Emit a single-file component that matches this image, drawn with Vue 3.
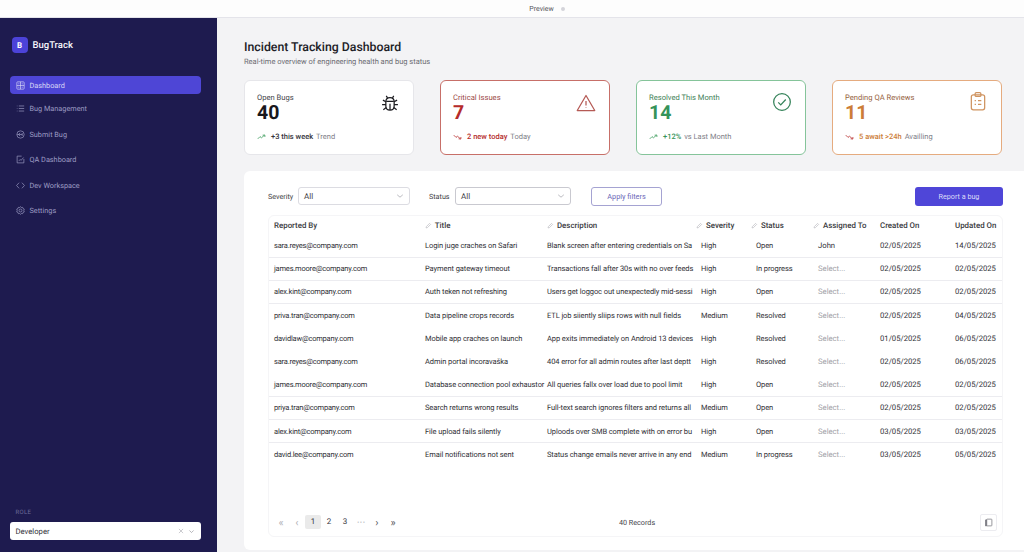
<script setup>
const navItems = [
  { label: 'Dashboard', icon: 'grid', active: true },
  { label: 'Bug Management', icon: 'list' },
  { label: 'Submit Bug', icon: 'submit' },
  { label: 'QA Dashboard', icon: 'chart' },
  { label: 'Dev Workspace', icon: 'code' },
  { label: 'Settings', icon: 'gear' }
]

const cards = [
  { label: 'Open Bugs', value: '40', strong: '+3 this week', note: 'Trend', tone: 'plain', icon: 'bug', up: true },
  { label: 'Critical Issues', value: '7', strong: '2 new today', note: 'Today', tone: 'red', icon: 'warn', up: false },
  { label: 'Resolved This Month', value: '14', strong: '+12%', note: 'vs Last Month', tone: 'green', icon: 'check', up: true },
  { label: 'Pending QA Reviews', value: '11', strong: '5 await >24h', note: 'Availling', tone: 'orange', icon: 'clip', up: false }
]

const columns = [
  { label: 'Reported By' },
  { label: 'Title', edit: true },
  { label: 'Description', edit: true },
  { label: 'Severity', edit: true, pull: true },
  { label: 'Status', edit: true, pull: true },
  { label: 'Assigned To', edit: true, pull: true },
  { label: 'Created On' },
  { label: 'Updated On' }
]

const rows = [
  ['sara.reyes@company.com', 'Login juge craches on Safari', 'Blank screen after entering credentials on Sa', 'High', 'Open', 'John', '02/05/2025', '14/05/2025', true],
  ['james.moore@company.com', 'Payment gateway timeout', 'Transactions fall after 30s with no over feeds', 'High', 'In progress', '', '02/05/2025', '02/05/2025', true],
  ['alex.kint@company.com', 'Auth teken not refreshing', 'Users get loggoc out unexpectedly mid-sessi', 'High', 'Open', '', '02/05/2025', '02/05/2025', true],
  ['priva.tran@company.com', 'Data pipeline crops records', 'ETL job siiently sliips rows with null fields', 'Medium', 'Resolved', '', '02/05/2025', '04/05/2025', false],
  ['davidlaw@company.com', 'Mobile app craches on launch', 'App exits immediately on Android 13 devices', 'High', 'Resolved', '', '01/05/2025', '06/05/2025', false],
  ['sara.reyes@company.com', 'Admin portal incoravaška', '404 error for all admin routes after last deptt', 'High', 'Resolved', '', '02/05/2025', '06/05/2025', false],
  ['james.moore@company.com', 'Database connection pool exhaustor', 'All queries fallx over load due to pool limit', 'High', 'Open', '', '02/05/2025', '02/05/2025', true],
  ['priya.tran@company.com', 'Search returns wrong results', 'Full-text search ignores filters and returns all', 'Medium', 'Open', '', '02/05/2025', '02/05/2025', true],
  ['alex.kint@company.com', 'File upload fails silently', 'Uploods over SMB complete with on error bu', 'High', 'Open', '', '03/05/2025', '03/05/2025', true],
  ['david.lee@company.com', 'Email notifications not sent', 'Status change emails never arrive in any end', 'Medium', 'In progress', '', '03/05/2025', '05/05/2025', false]
]
</script>

<template>
  <div class="page">
    <div class="topbar">
      <span>Preview</span>
      <i class="dot"></i>
    </div>

    <div class="shell">
      <aside class="sidebar">
        <div class="brand">
          <span class="logo">B</span>
          <span class="brand-name">BugTrack</span>
        </div>

        <nav class="nav">
          <a v-for="item in navItems" :key="item.label" class="nav-item" :class="{ active: item.active }">
            <svg viewBox="0 0 16 16" class="nav-icon">
              <template v-if="item.icon === 'grid'">
                <rect x="1.5" y="1.5" width="13" height="13" rx="1.5" />
                <path d="M8 1.500v13M1.500 8h13M4 5h2M10 5h2M4 11h2M10 11h2" />
              </template>
              <path v-else-if="item.icon === 'list'" d="M5 3.500h9.500M5 8h9.500M5 12.500h9.500M1.500 3.500h1M1.500 8h1M1.500 12.500h1" />
              <template v-else-if="item.icon === 'submit'">
                <circle cx="8" cy="8" r="6.500" />
                <path d="M2 8h9M7.500 5 4.500 8l3 3M11 5.500v5" />
              </template>
              <template v-else-if="item.icon === 'chart'">
                <path d="M14 7v7H2V2h8" />
                <path d="m5 10.500 2.500-2.500 1.500 1.500 4.500-5" />
              </template>
              <path v-else-if="item.icon === 'code'" d="M5.500 3 1 8l4.500 5M10.500 3 15 8l-4.500 5" />
              <template v-else>
                <circle cx="8" cy="8" r="2.600" />
                <path d="M8 1l1.500 1.800 2.300-.4.700 2.200 2.200.9-.8 2.500.8 2.500-2.200.9-.7 2.200-2.300-.4L8 15l-1.500-1.800-2.300.4-.7-2.200-2.200-.9.8-2.500-.8-2.500 2.200-.9.700-2.200 2.300.4z" />
              </template>
            </svg>
            {{ item.label }}
          </a>
        </nav>

        <div class="role">
          <div class="role-label">ROLE</div>
          <div class="role-select">
            <span>Developer</span>
            <span class="role-actions">
              <svg viewBox="0 0 10 10" class="role-x"><path d="m1.500 1.500 7 7M8.500 1.500l-7 7" /></svg>
              <svg viewBox="0 0 10 10" class="role-chev"><path d="m2 3.500 3 3 3-3" /></svg>
            </span>
          </div>
        </div>
      </aside>

      <main class="main">
        <header class="heading">
          <h1>Incident Tracking Dashboard</h1>
          <p>Real-time overview of engineering health and bug status</p>
        </header>

        <section class="cards">
          <div v-for="card in cards" :key="card.label" class="card" :class="card.tone">
            <div class="card-top">
              <div>
                <div class="card-label">{{ card.label }}</div>
                <div class="card-value">{{ card.value }}</div>
              </div>
              <svg viewBox="0 0 24 24" class="card-icon">
                <template v-if="card.icon === 'bug'">
                  <path d="M7 10.500C7 7.500 9 5.500 12 5.500s5 2 5 5v5c0 3-2 5-5 5s-5-2-5-5z" />
                  <path d="M7.500 10h9M12 13v7.500M9 5.800 7.500 3.500M15 5.800l1.500-2.300M7 10.500 3.500 8.500M17 10.500l3.500-2M7 14H2.500M17 14h4.500M7.500 17.500l-3.500 2.500M16.500 17.500l3.500 2.500" />
                </template>
                <template v-else-if="card.icon === 'warn'">
                  <path d="M12 3 22.500 21h-21z" stroke-linejoin="round" />
                  <path d="M12 9.500v5.500M12 17.500v.6" />
                </template>
                <template v-else-if="card.icon === 'check'">
                  <circle cx="12" cy="12" r="10" />
                  <path d="m7.500 12.500 3 3 6-6.500" />
                </template>
                <template v-else>
                  <rect x="4" y="4.500" width="16" height="18" rx="2.500" />
                  <rect x="8.500" y="2" width="7" height="4.500" rx="1.500" />
                  <path d="M8 11.500h1.500M12 11.500h4M8 16h1.500M12 16h4" />
                </template>
              </svg>
            </div>
            <div class="card-foot">
              <svg viewBox="0 0 12 8" class="trend" :class="{ down: !card.up }">
                <path v-if="card.up" d="m1 6.500 3-3 2 1.500 4-3.500M7.500 1.500H10.500V4" />
                <path v-else d="m1 1.500 3 3 2-1.500 4 3.500M7.500 6.500H10.500V4" />
              </svg>
              <b>{{ card.strong }}</b>
              <span>{{ card.note }}</span>
            </div>
          </div>
        </section>

        <section class="panel">
          <div class="toolbar">
            <label class="filter-label">Severity</label>
            <div class="select sev">
              <span>All</span>
              <svg viewBox="0 0 10 10"><path d="m1.500 3.500 3.500 3 3.500-3" /></svg>
            </div>
            <label class="filter-label status-label">Status</label>
            <div class="select stat">
              <span>All</span>
              <svg viewBox="0 0 10 10"><path d="m1.500 3.500 3.500 3 3.500-3" /></svg>
            </div>
            <button class="apply">Apply filters</button>
            <button class="report">Report a bug</button>
          </div>

          <div class="table-box">
            <table>
              <colgroup>
                <col class="col-1" />
                <col class="col-2" />
                <col class="col-3" />
                <col class="col-4" />
                <col class="col-5" />
                <col class="col-6" />
                <col class="col-7" />
                <col />
              </colgroup>
              <thead>
                <tr>
                  <th v-for="col in columns" :key="col.label" :class="{ pull: col.pull }">
                    <svg v-if="col.edit" viewBox="0 0 10 10" class="pencil"><path d="M1.500 8.500 2 6.500 6.500 2 8 3.500 3.500 8z" /></svg>
                    {{ col.label }}
                  </th>
                </tr>
              </thead>
              <tbody>
                <tr v-for="(row, i) in rows" :key="i" :class="{ lined: row[8] }">
                  <td class="email">{{ row[0] }}</td>
                  <td class="tight">{{ row[1] }}</td>
                  <td class="tight">{{ row[2] }}</td>
                  <td class="tight">{{ row[3] }}</td>
                  <td class="tight">{{ row[4] }}</td>
                  <td :class="{ placeholder: !row[5] }">{{ row[5] || 'Select...' }}</td>
                  <td>{{ row[6] }}</td>
                  <td>{{ row[7] }}</td>
                </tr>
              </tbody>
            </table>

            <div class="table-foot">
              <div class="pager">
                <span class="muted">«</span>
                <span class="muted">‹</span>
                <span class="page-num current">1</span>
                <span class="page-num">2</span>
                <span class="page-num">3</span>
                <span class="muted">···</span>
                <span>›</span>
                <span>»</span>
              </div>
              <div class="records">40 Records</div>
              <button class="copy">
                <svg viewBox="0 0 12 12">
                  <rect x="3.500" y="1.500" width="7" height="9" rx="0.800" />
                  <path d="M2 2.500h1.500v8H2z" fill="#8a8a90" />
                </svg>
              </button>
            </div>
          </div>
        </section>
      </main>
    </div>
  </div>
</template>

<style>
html, body {
  margin: 0;
  overflow: hidden;
}
</style>

<style scoped>
.page {
  width: 1024px;
  height: 552px;
  display: flex;
  flex-direction: column;
  overflow: hidden;
  font-family: Roboto, "Liberation Sans", sans-serif;
  text-rendering: geometricPrecision;
  color: #26262c;
  background: #f3f3f5;
}

.topbar {
  height: 17px;
  flex: none;
  display: flex;
  justify-content: center;
  align-items: center;
  gap: 7px;
  background: #fdfdfd;
  border-bottom: 1px solid #e4e4ea;
  font-size: 7px;
  color: #55555c;
  padding-left: 70px;
}

.dot {
  width: 4px;
  height: 4px;
  border-radius: 50%;
  background: #d4d4da;
}

.shell {
  flex: 1;
  display: flex;
  min-height: 0;
}

/* Sidebar */
.sidebar {
  width: 217px;
  flex: none;
  background: #1e1b4f;
  display: flex;
  flex-direction: column;
  padding: 19px 16px 12px 9.500px;
  box-sizing: border-box;
}

.brand {
  display: flex;
  align-items: center;
  gap: 5px;
  padding-left: 2px;
  margin-bottom: 23px;
}

.logo {
  width: 16px;
  height: 16px;
  border-radius: 4px;
  background: #4c43d8;
  color: #fff;
  font-size: 8px;
  font-weight: 700;
  display: flex;
  align-items: center;
  justify-content: center;
}

.brand-name {
  font-size: 9.500px;
  font-weight: 500;
  color: #f4f4fa;
}

.nav {
  display: flex;
  flex-direction: column;
  gap: 7.500px;
}

.nav-item {
  height: 18px;
  display: flex;
  align-items: center;
  gap: 5px;
  padding-left: 6px;
  border-radius: 4px;
  font-size: 7.300px;
  color: #9d9cc4;
}

.nav-item.active {
  background: #4e46d6;
  color: #d8d8f6;
  margin-bottom: -2px;
}

.nav-icon {
  width: 9px;
  height: 9px;
  fill: none;
  stroke: currentColor;
  stroke-width: 1.200;
  flex: none;
}

.role {
  margin-top: auto;
}

.role-label {
  font-size: 6px;
  letter-spacing: 0.300px;
  color: #6d6c9a;
  margin: 0 0 6px 6px;
}

.role-select {
  height: 18px;
  border-radius: 3px;
  background: #fff;
  display: flex;
  align-items: center;
  justify-content: space-between;
  padding: 0 6px;
  font-size: 7.700px;
  color: #33333a;
}

.role-actions {
  display: flex;
  align-items: center;
  gap: 4px;
}

.role-actions svg {
  fill: none;
  stroke-width: 1;
}

.role-x {
  width: 6px;
  height: 6px;
  stroke: #aaaab0;
}

.role-chev {
  width: 7px;
  height: 7px;
  stroke: #9a9aa0;
}

/* Main area */
.main {
  flex: 1;
  min-width: 0;
  padding: 23px 0 0 27px;
  display: flex;
  flex-direction: column;
}

.heading h1 {
  margin: 0;
  font-size: 12.300px;
  line-height: 15px;
  font-weight: 500;
  color: #202026;
}

.heading p {
  margin: 0;
  font-size: 7.500px;
  line-height: 11px;
  color: #6b6b72;
}

.cards {
  display: flex;
  gap: 26px;
  margin-top: 13px;
}

.card {
  width: 170px;
  height: 75px;
  box-sizing: border-box;
  flex: none;
  background: #fff;
  border: 1px solid #e6e6ea;
  border-radius: 6px;
  padding: 12px 12px 0;
  display: flex;
  flex-direction: column;
}

.card.red {
  border-color: #c76f68;
}

.card.green {
  border-color: #85c49a;
}

.card.orange {
  border-color: #e5ab7f;
}

.card-top {
  display: flex;
  justify-content: space-between;
  align-items: flex-start;
}

.card-label {
  font-size: 7.600px;
  line-height: 10px;
  color: #44444a;
}

.card-value {
  font-size: 19.500px;
  line-height: 20px;
  font-weight: 700;
  color: #18181c;
}

.card-icon {
  width: 20px;
  height: 20px;
  fill: none;
  stroke: #1c1c20;
  stroke-width: 1.500;
  margin-right: 1px;
}

.card-foot {
  margin-top: 9px;
  display: flex;
  align-items: center;
  gap: 3px;
  font-size: 7.500px;
  color: #808088;
}

.card-foot b {
  font-weight: 500;
  color: #33333a;
}

.trend {
  width: 9px;
  height: 6px;
  fill: none;
  stroke: #3f9e5f;
  stroke-width: 1.100;
  margin-right: 2px;
}

.trend.down {
  stroke: #b83232;
}

.red .card-label {
  color: #9c4a48;
}

.red .card-value,
.red .card-foot b {
  color: #b52b2b;
}

.red .card-icon {
  stroke: #b55a55;
}

.green .card-label {
  color: #3f7f58;
}

.green .card-value,
.green .card-foot b {
  color: #35935a;
}

.green .card-icon {
  stroke: #35835a;
  margin-top: -1px;
}

.orange .card-label {
  color: #96633e;
}

.orange .card-value,
.orange .card-foot b {
  color: #cc7d38;
}

.orange .card-icon {
  stroke: #cf935f;
  margin-top: -2px;
}

/* Panel */
.panel {
  flex: 1;
  margin-top: 16px;
  margin-bottom: 2px;
  background: #fff;
  border-radius: 6px 0 0 6px;
  padding: 15px 21px 0 24px;
  min-height: 0;
}

.toolbar {
  height: 20px;
  display: flex;
  align-items: center;
}

.filter-label {
  font-size: 7.200px;
  color: #3c3c42;
  width: 30px;
}

.status-label {
  margin-left: 19px;
  width: 26px;
}

.select {
  height: 18px;
  box-sizing: border-box;
  border: 1px solid #dcdce2;
  border-radius: 3px;
  display: flex;
  align-items: center;
  justify-content: space-between;
  padding: 0 5px;
  font-size: 8px;
  color: #44444a;
}

.select svg {
  width: 8px;
  height: 8px;
  fill: none;
  stroke: #a0a0a8;
  stroke-width: 0.900;
}

.select.sev {
  width: 112px;
}

.select.stat {
  width: 116px;
  border-color: #c9c9d0;
}

.apply {
  margin-left: 20px;
  width: 71px;
  height: 19px;
  box-sizing: border-box;
  border: 1px solid #a5a3d2;
  border-radius: 3px;
  background: #fff;
  font: inherit;
  font-size: 7.300px;
  color: #6c68b8;
}

.report {
  margin-left: auto;
  width: 88px;
  height: 19px;
  border: none;
  border-radius: 3px;
  background: #4f46d8;
  font: inherit;
  font-size: 7.200px;
  color: #dcdcf8;
}

.table-box {
  margin-top: 9px;
  height: 322px;
  box-sizing: border-box;
  border: 1px solid #f5f5f7;
  border-radius: 6px;
  display: flex;
  flex-direction: column;
}

table {
  width: 100%;
  border-collapse: collapse;
  table-layout: fixed;
}

.col-1 {
  width: 151px;
}

.col-2 {
  width: 122px;
}

.col-3 {
  width: 154px;
}

.col-4 {
  width: 55px;
}

.col-5 {
  width: 62px;
}

.col-6 {
  width: 62px;
}

.col-7 {
  width: 75px;
}

th {
  height: 18px;
  padding: 0 0 0 5px;
  text-align: left;
  font-size: 7.900px;
  font-weight: 500;
  color: #3a3a40;
  white-space: nowrap;
}

th.pull {
  padding-left: 0;
}

.pencil {
  width: 7px;
  height: 7px;
  margin-right: 1px;
  fill: none;
  stroke: #b4b4ba;
  stroke-width: 0.900;
  vertical-align: -1px;
}

td {
  height: 23.200px;
  padding: 0 0 0 5px;
  font-size: 7.700px;
  color: #303036;
  white-space: nowrap;
  box-sizing: border-box;
}

td.tight {
  font-size: 7.500px;
  letter-spacing: -0.080px;
}

td.email {
  font-size: 7.500px;
  letter-spacing: -0.200px;
}

tr.lined td {
  border-bottom: 1px solid #ececf0;
}

td.placeholder {
  color: #a2a2a8;
}

.table-foot {
  margin-top: auto;
  height: 34px;
  display: flex;
  align-items: center;
  position: relative;
  padding: 6px 5px 0 4px;
  box-sizing: border-box;
  font-size: 7.200px;
}

.pager {
  display: flex;
  align-items: center;
  color: #56565c;
}

.pager > span {
  width: 16px;
  text-align: center;
  font-size: 11px;
}

.pager .muted {
  color: #b0b0b6;
}

.pager .page-num {
  font-size: 8px;
  line-height: 14px;
  border-radius: 2px;
  color: #36363c;
}

.pager .current {
  background: #eaeaea;
}

.records {
  position: absolute;
  left: 350px;
  color: #44444a;
}

.copy {
  margin-left: auto;
  width: 17px;
  height: 17px;
  padding: 3px;
  background: #fff;
  border: 1px solid #ececf0;
  border-radius: 2px;
  display: flex;
}

.copy svg {
  width: 100%;
  height: 100%;
  fill: none;
  stroke: #77777e;
  stroke-width: 1;
}
</style>
